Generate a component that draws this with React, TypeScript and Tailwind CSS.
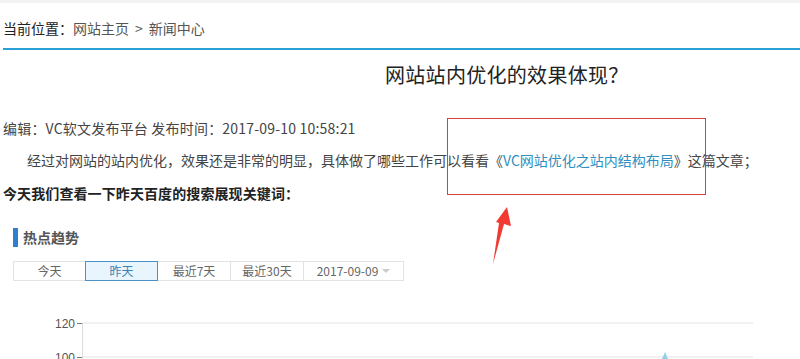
import React from 'react';

const tabs = ['今天', '昨天', '最近7天', '最近30天'];

export default function App() {
  return (
    <div className="relative w-[800px] h-[359px] overflow-hidden bg-white font-['Microsoft_YaHei','Noto_Sans_CJK_SC',sans-serif] text-[14px] text-[#444]">
      <div className="h-[3px] bg-[#f3f3f3]" />

      {/* breadcrumb */}
      <div className="ml-[3px] pt-[13px] pb-[8px] leading-[24px] border-b-2 border-[#2a9fd8]">
        <span className="text-[#222]">当前位置：</span>
        <span className="text-[#555]">
          网站主页<span className="mx-[6px]">&gt;</span>新闻中心
        </span>
      </div>

      {/* article */}
      <h1 className="mt-[10px] pl-[385px] leading-[30px] text-[20px] text-[#222] tracking-[0.3px]">网站站内优化的效果体现？</h1>
      <div className="mt-[26px] pl-[3px] leading-[24px] tracking-[0.2px]">编辑：VC软文发布平台 发布时间：2017-09-10 10:58:21</div>
      <p className="mt-[8px] pl-[3px] leading-[24px] indent-[24px] whitespace-nowrap">
        经过对网站的站内优化，效果还是非常的明显，具体做了哪些工作可以看看《
        <a className="text-[#2e8fc0]">VC网站优化之站内结构布局</a>》这篇文章；
      </p>
      <div className="mt-[9px] pl-[3px] leading-[24px] font-bold text-[#222] tracking-[0.1px]">今天我们查看一下昨天百度的搜索展现关键词：</div>

      {/* hot trend */}
      <div className="mt-[23px] ml-[13px] h-[19px] flex items-center gap-[5px]">
        <span className="w-[5px] h-[19px] bg-[#2f7fd0]" />
        <span className="font-bold text-[#555]">热点趋势</span>
      </div>
      <div className="mt-[14px] ml-[13px] flex text-[12px] text-[#666]">
        {tabs.map((t, i) => (
          <div
            key={t}
            className={
              i === 1
                ? 'relative z-10 -ml-px w-[73px] h-[20px] flex items-center justify-center border border-[#4a93c4] bg-[#e9f5fc] text-[#3c82b8]'
                : i === 0
                  ? 'w-[73px] h-[20px] flex items-center justify-center border border-[#e3e3e3]'
                  : '-ml-px w-[74px] h-[20px] flex items-center justify-center border border-[#e3e3e3]'
            }
          >
            {t}
          </div>
        ))}
        <div className="-ml-px w-[101px] h-[20px] flex items-center justify-center gap-[4px] border border-[#e3e3e3]">
          2017-09-09
          <span className="w-0 h-0 border-x-[4px] border-x-transparent border-t-[4px] border-t-[#cccccc]" />
        </div>
      </div>

      {/* chart */}
      <svg width="800" height="78" className="block">
        <line x1="82" y1="42" x2="753" y2="42" stroke="#ececec" strokeWidth="1.5" />
        <line x1="82" y1="76" x2="753" y2="76" stroke="#ececec" strokeWidth="1.5" />
        <line x1="82.5" y1="42" x2="82.5" y2="78" stroke="#dddddd" strokeWidth="1" />
        <line x1="77" y1="42.5" x2="82" y2="42.5" stroke="#777" strokeWidth="1" />
        <line x1="77" y1="76.5" x2="82" y2="76.5" stroke="#777" strokeWidth="1" />
        <text x="75" y="46.5" textAnchor="end" fontSize="12" fill="#555" fontFamily="'Liberation Sans', sans-serif">120</text>
        <text x="75" y="80.5" textAnchor="end" fontSize="12" fill="#555" fontFamily="'Liberation Sans', sans-serif">100</text>
        <polygon points="662,78 665,71 668,78" fill="#8fd0ec" />
      </svg>

      {/* annotation box */}
      <div className="absolute left-[447px] top-[118px] w-[259px] h-[77px] border border-[#d6403f]" />
      <svg className="absolute left-[485px] top-[200px]" width="30" height="70">
        <polygon points="22,7 26,26 19,24 8,64 14,23 11,22" fill="#f03a32" />
      </svg>
    </div>
  );
}
